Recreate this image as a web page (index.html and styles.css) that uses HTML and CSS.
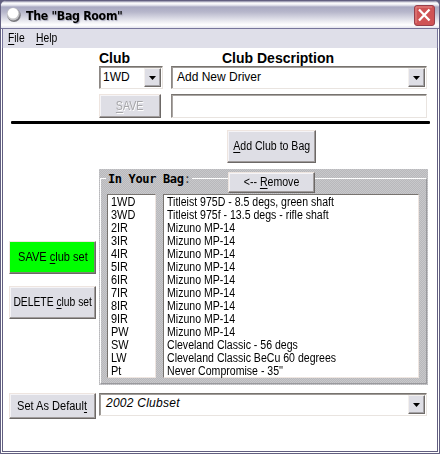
FILE: index.html
```html
<!DOCTYPE html>
<html lang="en">
<head>
<meta charset="utf-8">
<title>The "Bag Room"</title>
<link rel="stylesheet" href="styles.css">
</head>
<body>
<div class="window">
  <header class="titlebar">
    <svg class="ball" width="16" height="16" viewBox="0 0 16 16"><circle cx="8" cy="8.3" r="6.7" fill="#77777d"/><circle cx="7.2" cy="7" r="6.4" fill="#c3c3c6"/><circle cx="7" cy="6.2" r="5.3" fill="#fff"/></svg>
    <h1>The "Bag Room"</h1>
    <svg class="close" width="21" height="21" viewBox="0 0 21 21"><rect x=".5" y=".5" width="20" height="20" rx="2.5" fill="#cf5355" stroke="#963f4b"/><path d="M2 18V2h16" fill="none" stroke="#e58a88"/><path d="M5 4.500 15.500 15.500M15.500 4.500 5 15.500" stroke="#fff" stroke-width="2.300"/></svg>
  </header>
  <nav class="menubar"><span><u>F</u>ile</span><span class="help"><u>H</u>elp</span></nav>
  <main>
    <section class="entry">
      <b class="label-club">Club</b><b class="label-desc">Club Description</b>
      <div class="combo club"><span>1WD</span><i class="arrow"><svg width="7" height="4" viewBox="0 0 7 4"><path d="M0 0h7L3.500 4z"/></svg></i></div>
      <div class="combo description"><span>Add New Driver</span><i class="arrow"><svg width="7" height="4" viewBox="0 0 7 4"><path d="M0 0h7L3.500 4z"/></svg></i></div>
      <button class="btn save" disabled><span><u>S</u>AVE</span></button>
      <div class="field"></div>
    </section>
    <div class="rule"></div>
    <button class="btn add"><span><u>A</u>dd Club to Bag</span></button>
    <section class="bag-row">
      <div class="side">
        <button class="btn green"><span>SAVE <u>c</u>lub set</span></button>
        <button class="btn delete"><span>DELETE <u>c</u>lub set</span></button>
      </div>
      <div class="bag">
        <div class="group">
          <b class="legend">In Your Bag<span>:</span></b>
          <button class="btn remove"><span>&lt;-- <u>R</u>emove</span></button>
          <ul class="list codes"><li>1WD</li><li>3WD</li><li>2IR</li><li>3IR</li><li>4IR</li><li>5IR</li><li>6IR</li><li>7IR</li><li>8IR</li><li>9IR</li><li>PW</li><li>SW</li><li>LW</li><li>Pt</li></ul>
          <ul class="list names"><li>Titleist 975D - 8.5 degs, green shaft</li><li>Titleist 975f - 13.5 degs - rifle shaft</li><li>Mizuno MP-14</li><li>Mizuno MP-14</li><li>Mizuno MP-14</li><li>Mizuno MP-14</li><li>Mizuno MP-14</li><li>Mizuno MP-14</li><li>Mizuno MP-14</li><li>Mizuno MP-14</li><li>Mizuno MP-14</li><li>Cleveland Classic - 56 degs</li><li>Cleveland Classic BeCu 60 degrees</li><li>Never Compromise - 35''</li></ul>
        </div>
      </div>
    </section>
    <section class="bottom">
      <button class="btn default"><span>Set As Defaul<u>t</u></span></button>
      <div class="combo"><em>2002 Clubset</em><i class="arrow"><svg width="7" height="4" viewBox="0 0 7 4"><path d="M0 0h7L3.500 4z"/></svg></i></div>
    </section>
  </main>
</div>
</body>
</html>
```
FILE: styles.css
```css
* { box-sizing: border-box; }
body { margin: 0; width: 440px; height: 454px; overflow: hidden; background: #625f80; font: 12px/13px "Liberation Sans", Arial, sans-serif; color: #000; }
.window { width: 440px; height: 454px; border: 1px solid #625f80; border-radius: 6px 6px 0 0; background: #fff; overflow: hidden; display: flex; flex-direction: column; }
.titlebar { height: 28px; flex: none; display: flex; align-items: center; padding: 0 4px 0 5px; border-bottom: 1px solid #77759b; background: linear-gradient(#8583a0 0, #fff 2px, #e8e8f0 4px, #a9a9c2 6px, #b7b7cb 11px, #dedee8 18px, #fff 24px, #e3e3ed 27px); }
.titlebar h1 { margin: 3px 0 0 4px; font: bold 13px/16px "DejaVu Sans Condensed", "DejaVu Sans", sans-serif; letter-spacing: -.35px; transform: scaleX(.945); transform-origin: left; white-space: nowrap; text-shadow: 1px 1px 1px #aaaabd; }
.ball { margin-top: 1px; }
.close { margin: 2px 0 0 auto; }
.menubar { height: 19px; flex: none; display: flex; gap: 9px; margin: 0 1px; padding: 3px 5px; background: #dfdfe9; border-left: 1px solid #77759b; border-right: 1px solid #77759b; }
.menubar span { transform: scaleX(.86); transform-origin: left; }
u { text-decoration: underline; text-underline-offset: 2px; text-decoration-thickness: 1px; }
main { flex: 1; margin: 0 1px 1px; padding-left: 6px; border: 1px solid #625f80; border-top: 0; }
.entry { display: grid; grid-template-columns: 64px 256px; grid-template-rows: 15px 23px 30px; column-gap: 8px; margin: 3px 0 0 90px; }
.entry b { font-size: 14px; line-height: 15px; white-space: nowrap; }
.label-desc { padding-left: 51px; }
.entry .save, .entry .field { margin-top: 5px; }
.combo { height: 23px; display: flex; align-items: center; justify-content: space-between; padding: 1px 1px 1px 5px; border: 1px solid; border-color: #77736f #e9e4e0 #e9e4e0 #8c8784; box-shadow: inset 1px 1px #a09c98; background: #fff; white-space: nowrap; }
.combo.club { padding-left: 3px; }
.arrow { width: 17px; height: 19px; display: flex; align-items: center; justify-content: center; background: #dedee5; border: 1px solid; border-color: #f3f0ee #706c69 #706c69 #f3f0ee; box-shadow: inset -1px -1px #a5a3a7; }
.field { height: 24px; border: 1px solid; border-color: #77736f #e9e4e0 #e9e4e0 #8c8784; box-shadow: inset 1px 1px #aaa6a3; }
.btn { display: flex; align-items: center; justify-content: center; margin: 0; padding: 0; font: inherit; color: #000; white-space: nowrap; border: 1px solid; border-color: #eee5e0 #6c6866 #6c6866 #eee5e0; border-radius: 0; background: #dedee5; box-shadow: inset -1px -1px #a09c9c, inset 1px 1px #f5f4f7; }
.btn span { transform: scaleX(.88); }
.save { width: 62px; height: 24px; }
.save:disabled { color: #a5a5a8; text-shadow: 1px 1px #fff; }
.rule { width: 419px; height: 3px; margin: 2px 0 0 2px; background: #000; border-radius: 1px; }
.add { width: 89px; height: 33px; margin: 6px 0 6px 218px; }
.bag-row { display: flex; gap: 3px; height: 216px; }
.side { width: 87px; padding-top: 72px; }
.side .btn { width: 87px; height: 33px; }
.side .green { background: #0f0; box-shadow: inset -1px -1px #7d8c73; margin-bottom: 12px; }
.green span, .default span { transform: scaleX(.92); }
.delete span { transform: scaleX(.86); }
.bag { width: 329px; padding: 9px 1px 1px; background: repeating-conic-gradient(#b8b8bb 0 25%, #c8c8cb 0 50%) 0 0 / 2px 2px; }
.group { position: relative; height: 206px; display: flex; gap: 7px; padding: 15px 7px 6px 6px; border: 1px solid #99999d; border-top-color: #fff; border-left-color: #fff; }
.legend { position: absolute; left: 5px; top: -9px; width: 86px; height: 16px; padding-left: 2px; background: repeating-conic-gradient(#b8b8bb 0 25%, #c8c8cb 0 50%) 0 0 / 2px 2px; font: bold 12px/18px "DejaVu Sans Mono", monospace; letter-spacing: -.35px; white-space: nowrap; }
.legend span { color: #444; font-weight: normal; }
.btn.remove { position: absolute; left: 127px; top: -7px; width: 87px; height: 21px; }
.list { width: 49px; height: 184px; margin: 0; padding: 1px 0 0 3px; list-style: none; background: #fff; border: 1px solid; border-color: #77736f #eee5e0 #eee5e0 #77736f; white-space: nowrap; }
.list li { transform: scaleX(.88); transform-origin: left; }
.codes li { transform: scaleX(.91); }
.names { width: 257px; }
.bottom { display: flex; gap: 3px; margin-top: 8px; }
.default { width: 87px; height: 26px; }
.bottom .combo { width: 328px; padding-left: 6px; }
.bottom em { margin-top: -2px; letter-spacing: .25px; }
```
